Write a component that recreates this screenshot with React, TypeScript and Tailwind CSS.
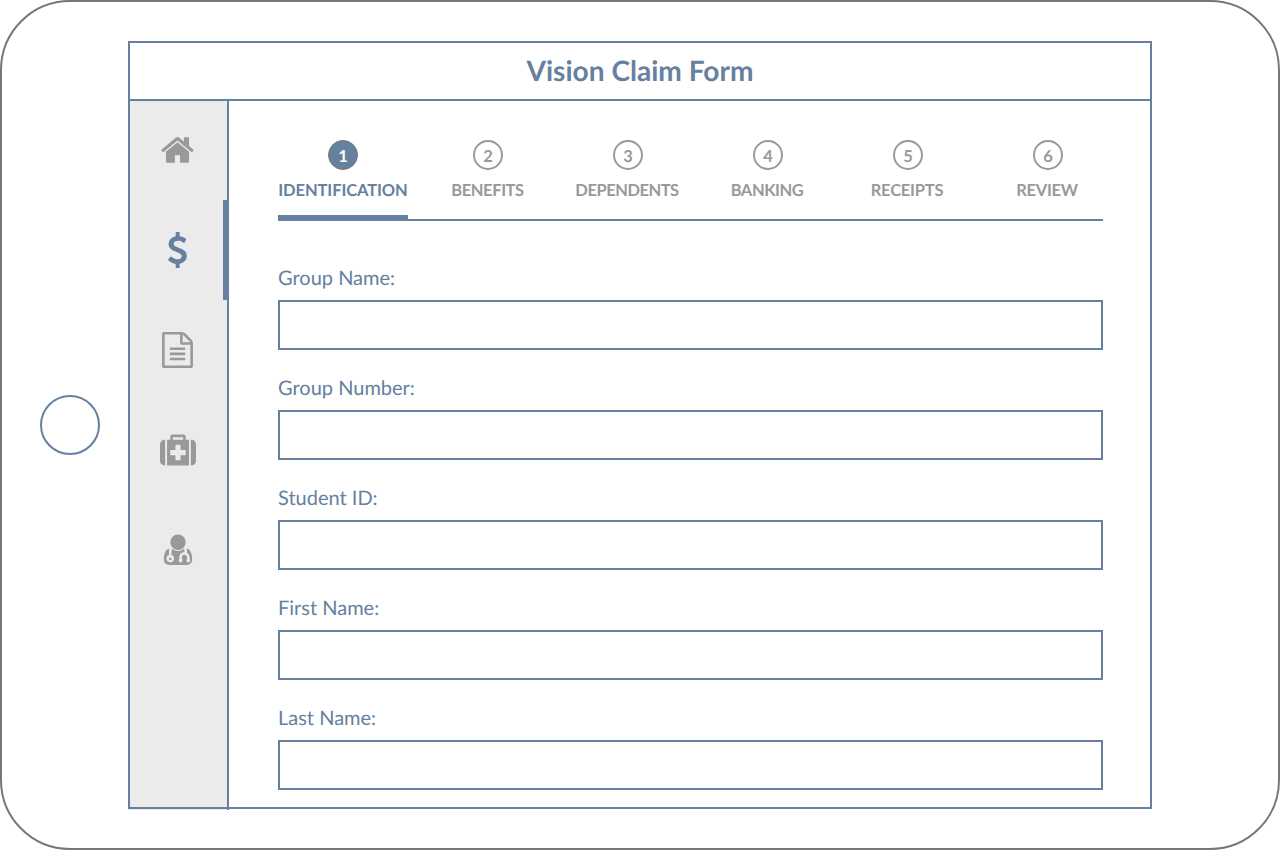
import React from "react";

const navIcons = [
  {
    name: "Home",
    viewBox: "25 0 1792 1792",
    path: "M1472 992v480q0 26-19 45t-45 19h-384v-384h-256v384h-384q-26 0-45-19t-19-45v-480q0-1 .5-3t.5-3l575-474 575 474q1 2 1 6zm223-69l-62 74q-8 9-21 11h-3q-13 0-21-7l-692-577-692 577q-12 8-24 7-13-2-21-11l-62-74q-8-10-7-23.5t11-21.5l719-599q32-26 76-26t76 26l244 204v-195q0-14 9-23t23-9h192q14 0 23 9t9 23v408l219 182q10 8 11 21.5t-7 23.5z",
  },
  {
    name: "Claims",
    viewBox: "25 0 1792 1792",
    path: "M1362 1185q0 153-99.5 263.5t-258.5 136.5v175q0 14-9 23t-23 9h-135q-13 0-22.5-9.5t-9.5-22.5v-175q-66-9-127.5-31t-101.5-44.5-74-48-46.5-37.5-17.5-18q-17-21-2-41l103-135q7-10 23-12 15-2 24 9l2 2q113 99 243 125 37 8 74 8 81 0 142.5-43t61.5-122q0-28-15-53t-33.5-42-58.5-37.5-66-32-80-32.5q-39-16-61.5-25t-61.5-26.5-62.5-31-56.5-35.5-53.5-42.5-43.5-49-35.5-58-21-66.5-8.5-78q0-138 98-242t255-134v-180q0-13 9.5-22.5t22.5-9.5h135q14 0 23 9t9 23v176q57 6 110.5 23t87 33.5 63.5 37.5 39 29 15 14q17 18 5 38l-81 146q-8 15-23 16-14 3-27-7-3-3-14.5-12t-39-26.5-58.5-32-74.5-26-85.5-11.5q-95 0-155 43t-60 111q0 26 8.5 48t29.5 41.5 39.5 33 56 31 60.5 27 70 27.5q53 20 81 31.5t76 35 75.5 42.5 62 50 53 63.5 31.5 76.5 13 94z",
    active: true,
  },
  {
    name: "Documents",
    viewBox: "25 0 1792 1792",
    path: "M1596 380q28 28 48 76t20 88v1152q0 40-28 68t-68 28h-1344q-40 0-68-28t-28-68v-1600q0-40 28-68t68-28h896q40 0 88 20t76 48zm-444-244v376h376q-10-29-22-41l-313-313q-12-12-41-22zm384 1528v-1024h-416q-40 0-68-28t-28-68v-416h-768v1536h1280zm-1024-864q0-14 9-23t23-9h704q14 0 23 9t9 23v64q0 14-9 23t-23 9h-704q-14 0-23-9t-9-23v-64zm736 224q14 0 23 9t9 23v64q0 14-9 23t-23 9h-704q-14 0-23-9t-9-23v-64q0-14 9-23t23-9h704zm0 256q14 0 23 9t9 23v64q0 14-9 23t-23 9h-704q-14 0-23-9t-9-23v-64q0-14 9-23t23-9h704z",
  },
  {
    name: "Coverage",
    viewBox: "0 0 1792 1792",
    path: "M1280 1120v-192q0-14-9-23t-23-9h-224v-224q0-14-9-23t-23-9h-192q-14 0-23 9t-9 23v224h-224q-14 0-23 9t-9 23v192q0 14 9 23t23 9h224v224q0 14 9 23t23 9h192q14 0 23-9t9-23v-224h224q14 0 23-9t9-23zm-640-736h512v-128h-512v128zm-384 0v1280h-32q-92 0-158-66t-66-158v-832q0-92 66-158t158-66h32zm1184 0v1280h-1088v-1280h160v-160q0-40 28-68t68-28h576q40 0 68 28t28 68v160h160zm352 224v832q0 92-66 158t-158 66h-32v-1280h32q92 0 158 66t66 158z",
  },
  {
    name: "Doctors",
    viewBox: "0 0 1792 1792",
    path: "M576 1344q0 26-19 45t-45 19-45-19-19-45 19-45 45-19 45 19 19 45zm1024 37q0 121-73 192t-194 71h-874q-121 0-194-71t-73-192q0-68 5.5-131t24-138 47.5-132.5 81-103 120-60.5q-22 52-22 120v203q-58 20-93 70t-35 111q0 80 56 136t136 56 136-56 56-136q0-61-35.5-111t-92.5-70v-203q0-62 25-93 132 104 295 104t295-104q25 31 25 93v64q-106 0-181 75t-75 181v89q-32 29-32 71 0 40 28 68t68 28 68-28 28-68q0-42-32-71v-89q0-52 38-90t90-38 90 38 38 90v89q-32 29-32 71 0 40 28 68t68 28 68-28 28-68q0-42-32-71v-89q0-68-34.5-127.5t-93.5-93.5q0-10 .5-42.5t0-48-2.5-41.5-7-47-13-40q68 15 120 60.5t81 103 47.5 132.5 24 138 5.5 131zm-320-869q0 159-112.5 271.5t-271.5 112.5-271.5-112.5-112.5-271.5 112.5-271.5 271.5-112.5 271.5 112.5 112.5 271.5z",
  },
];

const steps = [
  { label: "IDENTIFICATION", tracking: "tracking-[-0.1px]" },
  { label: "BENEFITS", tracking: "tracking-[-0.4px]" },
  { label: "DEPENDENTS", tracking: "tracking-[-0.48px]" },
  { label: "BANKING", tracking: "tracking-[-0.43px]" },
  { label: "RECEIPTS", tracking: "tracking-[-0.22px]" },
  { label: "REVIEW", tracking: "tracking-[-0.33px]" },
];
const fields = ["Group Name:", "Group Number:", "Student ID:", "First Name:", "Last Name:"];

function Sidebar() {
  return (
    <nav className="-mb-px -mt-px w-[101px] shrink-0 border-r-2 border-[#6680a0] bg-[#ebebeb]">
      {navIcons.map((icon) => (
        <a
          key={icon.name}
          aria-label={icon.name}
          className={
            icon.active
              ? "-mr-px flex h-[100px] items-center border-r-[5px] border-[#6680a0] pl-8 text-[#6680a0]"
              : "flex h-[100px] items-center pl-8 text-[#999999]"
          }
        >
          <svg viewBox={icon.viewBox} className="size-9 fill-current">
            <path d={icon.path} />
          </svg>
        </a>
      ))}
    </nav>
  );
}

function Steps() {
  return (
    <ol className="flex h-[81px] border-b-2 border-[#6680a0]">
      {steps.map(({ label, tracking }, i) => (
        <li
          key={label}
          className={
            i === 0
              ? "-mb-0.5 flex w-[130px] shrink-0 flex-col items-center border-b-[6px] border-[#6680a0] text-[#6680a0]"
              : i === 1
                ? "ml-[10px] flex w-[139px] shrink-0 flex-col items-center text-[#999999]"
                : "flex w-[140px] shrink-0 flex-col items-center text-[#999999]"
          }
        >
          <span
            className={
              i === 0
                ? "flex size-[30px] items-center justify-center rounded-full border border-[#777777] bg-[#6680a0] pt-px text-[16.5px] leading-6 font-bold text-white"
                : i === 1
                  ? "ml-px flex size-[30px] items-center justify-center rounded-full border-2 border-[#999999] pt-px text-[16.5px] leading-6 font-bold"
                  : "ml-0.5 flex size-[30px] items-center justify-center rounded-full border-2 border-[#999999] pt-px text-[16.5px] leading-6 font-bold"
            }
          >
            {i + 1}
          </span>
          <span className={`mt-2 text-[16.5px] leading-6 font-bold whitespace-nowrap ${tracking}`}>{label}</span>
        </li>
      ))}
    </ol>
  );
}

export default function App() {
  return (
    <div className="flex h-[850px] w-[1280px] items-center overflow-hidden rounded-[70px] border-2 border-[#777777] bg-white pl-[38px] font-['Lato',sans-serif] text-[#6680a0] [text-rendering:geometricPrecision]">
      <button aria-label="Home button" className="size-[60px] shrink-0 rounded-full border-2 border-[#6680a0]" />
      <main className="relative ml-7 flex h-[768px] w-[1024px] shrink-0 flex-col">
        <header className="relative flex h-[60px] shrink-0 items-center justify-center border-b-2 border-[#6680a0]">
          <h1 className="text-[28.1px] font-bold leading-9">Vision Claim Form</h1>
        </header>
        <div className="flex min-h-0 flex-1">
          <Sidebar />
          <section className="ml-[49px] w-[825px] pt-[39px]">
            <Steps />
            <form className="flex flex-col pt-[39px]">
              {fields.map((label) => (
                <label key={label} className="flex h-[110px] flex-col text-xl leading-9">
                  {label}
                  <input className="mt-1 h-[50px] w-full border-2 border-[#6680a0] bg-white px-3 outline-none" />
                </label>
              ))}
            </form>
          </section>
        </div>
        <div className="pointer-events-none absolute inset-0 border-2 border-[#6680a0]" />
      </main>
    </div>
  );
}
